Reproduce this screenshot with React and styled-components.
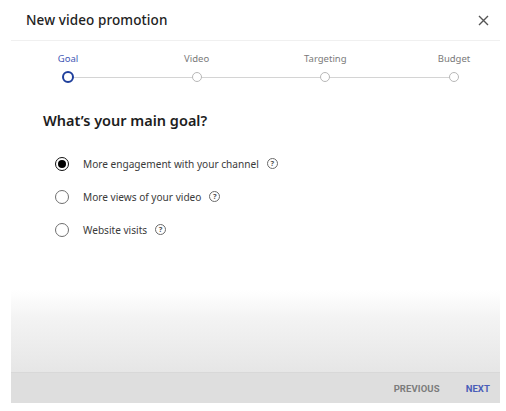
import React from "react"
import styled, { createGlobalStyle } from "styled-components"

const GlobalStyle = createGlobalStyle`
  html, body {
    margin: 0;
    padding: 0;
    background: #ffffff;
  }
  body {
    font-family: "Noto Sans", "Open Sans", Arial, sans-serif;
    color: #202020;
  }
`

const Dialog = styled.div`
  width: 489px;
  height: 403px;
  margin: 0 11px;
  display: flex;
  flex-direction: column;
  background: #fff;
`

const Header = styled.header`
  height: 40px;
  flex: none;
  display: flex;
  align-items: center;
  justify-content: space-between;
  padding: 0 9px 0 15px;
  border-bottom: 1px solid #f0f0f0;
`

const Title = styled.h1`
  margin: 0;
  font-size: 13.5px;
  font-weight: 500;
  color: #222;
  letter-spacing: 0.1px;
`

const CloseButton = styled.button`
  border: 0;
  background: none;
  padding: 0;
  width: 16px;
  height: 16px;
  display: flex;
  align-items: center;
  justify-content: center;
  cursor: pointer;
`

const Body = styled.div`
  height: 249px;
  flex: none;
`

const Stepper = styled.div`
  position: relative;
  margin: 0 46px 0 57px;
  padding-top: 12px;
  display: flex;
  justify-content: space-between;

  &::before {
    content: "";
    position: absolute;
    left: 0;
    right: 0;
    top: 35.5px;
    height: 1.5px;
    background: #d4d4d4;
  }
`

const Step = styled.div`
  width: 0;
  display: flex;
  flex-direction: column;
  align-items: center;
  position: relative;
`

const StepLabel = styled.span`
  font-size: 9.5px;
  line-height: 12px;
  white-space: nowrap;
  color: ${(p) => (p.$active ? "#3f57b5" : "#7a7a7a")};
`

const StepDot = styled.span`
  box-sizing: border-box;
  width: ${(p) => (p.$active ? 12 : 10)}px;
  height: ${(p) => (p.$active ? 12 : 10)}px;
  margin-top: ${(p) => (p.$active ? 6 : 7)}px;
  border-radius: 50%;
  background: #fff;
  border: ${(p) => (p.$active ? "2.5px solid #1f3f9c" : "1.5px solid #b8b8b8")};
`

const Heading = styled.h2`
  margin: 27px 0 0 32px;
  font-size: 14.5px;
  line-height: 20px;
  font-weight: 600;
  color: #1d1d1d;
`

const Options = styled.div`
  margin: 17px 0 0 44px;
  display: flex;
  flex-direction: column;
`

const Option = styled.label`
  height: 33px;
  display: flex;
  align-items: center;
  cursor: pointer;
`

const Radio = styled.span`
  box-sizing: border-box;
  width: 14px;
  height: 14px;
  border-radius: 50%;
  border: 1.5px solid ${(p) => (p.$checked ? "#111" : "#6f6f6f")};
  display: flex;
  align-items: center;
  justify-content: center;
  margin-right: 14px;

  &::after {
    content: "";
    width: 8px;
    height: 8px;
    border-radius: 50%;
    background: ${(p) => (p.$checked ? "#000" : "transparent")};
  }
`

const OptionText = styled.span`
  font-size: 10.1px;
  color: #3a3a3a;
`

const Help = styled.span`
  box-sizing: border-box;
  margin-left: 8px;
  width: 11px;
  height: 11px;
  border-radius: 50%;
  border: 1px solid #6a6a6a;
  font-size: 7.5px;
  line-height: 9px;
  font-weight: 700;
  text-align: center;
  color: #555;
`

const Fade = styled.div`
  height: 82px;
  flex: none;
  background: linear-gradient(to bottom, #ffffff 0%, #f3f3f3 35%, #e6e6e6 100%);
`

const Footer = styled.footer`
  height: 30px;
  flex: none;
  border-top: 1px solid #d8d8d8;
  background: #dedede;
  display: flex;
  align-items: center;
  justify-content: flex-end;
  padding-right: 10px;
  gap: 26px;
`

const FooterButton = styled.button`
  border: 0;
  background: none;
  padding: 0;
  font-family: Roboto, "Noto Sans", Arial, sans-serif;
  font-size: 9.5px;
  font-weight: 700;
  letter-spacing: 0.1px;
  color: ${(p) => (p.$primary ? "#4a5db8" : "#7c7c7c")};
  cursor: pointer;
`

const steps = ["Goal", "Video", "Targeting", "Budget"]

const goals = [
  "More engagement with your channel",
  "More views of your video",
  "Website visits",
]

const CloseIcon = () => (
  <svg width="11" height="11" viewBox="0 0 11 11">
    <path d="M1 1 L10 10 M10 1 L1 10" stroke="#555" strokeWidth="1.4" />
  </svg>
)

export default function App() {
  const current = 0
  const selected = 0

  return (
    <>
      <GlobalStyle />
      <Dialog>
        <Header>
          <Title>New video promotion</Title>
          <CloseButton aria-label="Close">
            <CloseIcon />
          </CloseButton>
        </Header>

        <Body>
          <Stepper>
            {steps.map((s, i) => (
              <Step key={s}>
                <StepLabel $active={i === current}>{s}</StepLabel>
                <StepDot $active={i === current} />
              </Step>
            ))}
          </Stepper>

          <Heading>What’s your main goal?</Heading>

          <Options>
            {goals.map((g, i) => (
              <Option key={g}>
                <Radio $checked={i === selected} />
                <OptionText>{g}</OptionText>
                <Help>?</Help>
              </Option>
            ))}
          </Options>
        </Body>

        <Fade />

        <Footer>
          <FooterButton>PREVIOUS</FooterButton>
          <FooterButton $primary>NEXT</FooterButton>
        </Footer>
      </Dialog>
    </>
  )
}
